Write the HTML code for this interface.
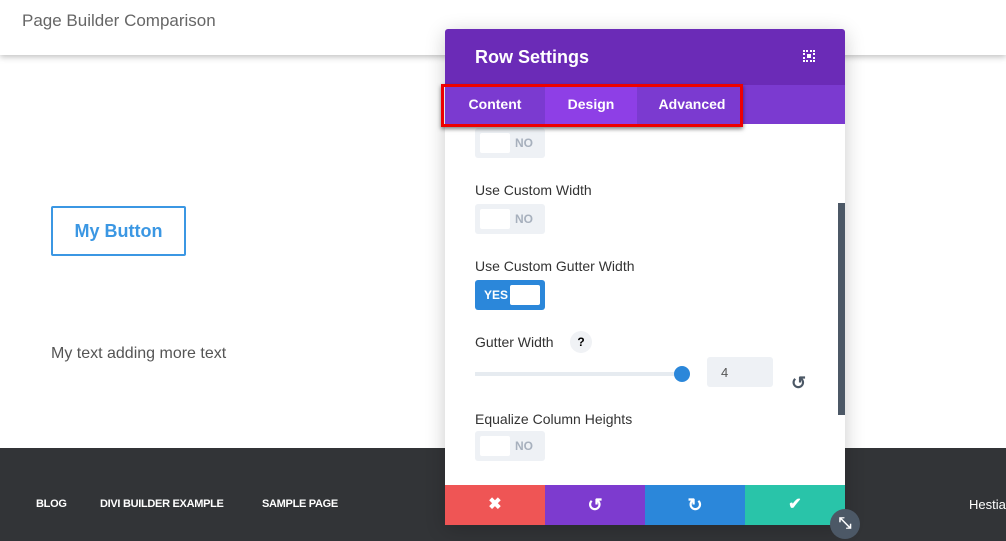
<!DOCTYPE html>
<html><head><style>
*{margin:0;padding:0;box-sizing:border-box}
body{width:1006px;height:541px;overflow:hidden;background:#fff;font-family:"Liberation Sans",sans-serif;position:relative}
.top{position:absolute;left:0;top:0;width:1006px;height:55px;background:#fff;box-shadow:0 2px 6px rgba(0,0,0,.25)}
.top span{position:absolute;left:22px;top:11px;font-size:17px;color:#666}
.btn{position:absolute;left:51px;top:206px;width:135px;height:50px;border:2px solid #3b97e3;color:#3b97e3;font-size:18px;font-weight:bold;text-align:center;line-height:46px;border-radius:2px}
.txt{position:absolute;left:51px;top:345px;font-size:16px;color:#555}
.foot{position:absolute;left:0;top:448px;width:1006px;height:93px;background:#323437}
.foot b{position:absolute;top:50px;font-size:11px;color:#fff;letter-spacing:-0.3px}
.modal{position:absolute;left:445px;top:29px;width:400px;height:496px;background:#fff;box-shadow:0 4px 20px rgba(0,0,0,.2);border-radius:3px 3px 0 0;overflow:hidden}
.hd{height:56px;background:#6b2bb7;color:#fff;font-weight:bold;font-size:18px;padding:18px 30px}
.tabs{height:39px;background:#7b3ad0;position:relative}
.tabs div{position:absolute;top:0;height:39px;line-height:39px;color:#fff;font-weight:bold;font-size:14px;text-align:center}
.lbl{position:absolute;left:30px;font-size:14px;color:#333}
.tg{position:absolute;left:30px;width:70px;height:30px;background:#eef1f5;border-radius:3px}
.tg i{position:absolute;left:5px;top:5px;width:30px;height:20px;background:#fff;border-radius:2px}
.tg b{position:absolute;left:40px;top:8px;font-size:12px;color:#a7b0bd}
.bar{position:absolute;top:456px;height:40px;width:100px}
</style></head><body>
<div class="top"><span>Page Builder Comparison</span></div>
<div class="btn">My Button</div>
<div class="txt">My text adding more text</div>
<div class="foot"><b style="left:36px">BLOG</b><b style="left:100px">DIVI BUILDER EXAMPLE</b><b style="left:262px">SAMPLE PAGE</b><span style="position:absolute;left:969px;top:49px;color:#fff;font-size:13px">Hestia</span></div>
<div class="modal">
<div class="hd">Row Settings<span style="position:absolute;right:30px;top:21px;width:12px;height:12px;border:2px dotted #fff"><i style="position:absolute;left:2px;top:2px;width:4px;height:4px;background:#fff"></i></span></div>
<div class="tabs"><div style="left:0;width:100px">Content</div><div style="left:100px;width:92px;background:#8e3fe6">Design</div><div style="left:192px;width:110px">Advanced</div></div>
<div class="tg" style="top:99px"><i></i><b>NO</b></div>
<div class="lbl" style="top:153px">Use Custom Width</div>
<div class="tg" style="top:175px"><i></i><b>NO</b></div>
<div class="lbl" style="top:229px">Use Custom Gutter Width</div>
<div class="tg" style="top:251px;background:#2b87da"><i style="left:35px"></i><b style="left:9px;color:#fff">YES</b></div>
<div class="lbl" style="top:305px">Gutter Width</div>
<div style="position:absolute;left:125px;top:302px;width:22px;height:22px;border-radius:50%;background:#f0f2f5;text-align:center;line-height:22px;font-size:12px;font-weight:bold">?</div>
<div style="position:absolute;left:30px;top:343px;width:208px;height:4px;background:#e6ebf0"></div>
<div style="position:absolute;left:229px;top:337px;width:16px;height:16px;border-radius:50%;background:#2b87da"></div>
<div style="position:absolute;left:262px;top:328px;width:66px;height:30px;background:#eef1f5;border-radius:3px;font-size:13px;color:#555;padding:8px 14px">4</div>
<div style="position:absolute;left:346px;top:344px;font-size:18px;color:#4c5866;font-weight:bold">↺</div>
<div class="lbl" style="top:382px">Equalize Column Heights</div>
<div class="tg" style="top:402px"><i></i><b>NO</b></div>
<div style="position:absolute;left:393px;top:174px;width:7px;height:212px;background:#4c5866"></div>
<div class="bar" style="left:0;background:#ef5555;color:#fff;text-align:center;line-height:40px;font-weight:bold;font-size:16px">✖</div>
<div class="bar" style="left:100px;background:#7d3bcf;color:#fff;text-align:center;line-height:40px;font-weight:bold;font-size:18px">↺</div>
<div class="bar" style="left:200px;background:#2b87da;color:#fff;text-align:center;line-height:40px;font-weight:bold;font-size:18px">↻</div>
<div class="bar" style="left:300px;background:#29c4a9;color:#fff;text-align:center;line-height:40px;font-weight:bold;font-size:16px">✔</div>
</div>
<div style="position:absolute;left:441px;top:84px;width:302px;height:43px;border:3px solid #e00;box-shadow:0 2px 4px rgba(0,0,0,.5)"></div>
<div style="position:absolute;left:830px;top:509px;width:30px;height:30px;border-radius:50%;background:#4c5866;color:#fff;text-align:center;line-height:30px;font-size:16px;font-weight:bold">⤡</div>
</body></html>
